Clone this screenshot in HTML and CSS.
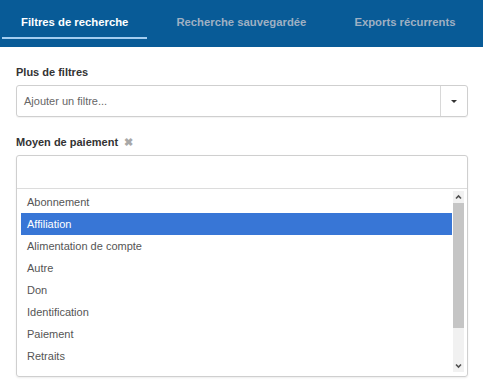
FILE: index.html
```html
<!DOCTYPE html>
<html lang="fr">
<head>
<meta charset="utf-8">
<link rel="stylesheet" href="styles.css">
</head>
<body>
<header class="header">
  <nav class="tabs">
    <span class="tab active">Filtres de recherche</span>
    <span class="tab">Recherche sauvegardée</span>
    <span class="tab">Exports récurrents</span>
  </nav>
</header>
<main class="content">
  <section class="field">
    <label class="label">Plus de filtres</label>
    <div class="select">
      <span class="select-text">Ajouter un filtre...</span>
      <span class="select-arrow"><span class="caret"></span></span>
    </div>
  </section>
  <section class="field">
    <label class="label">Moyen de paiement <span class="remove">✖</span></label>
    <div class="multi">
      <div class="multi-input"></div>
      <div class="results">
        <ul class="options">
          <li>Abonnement</li>
          <li class="hl">Affiliation</li>
          <li>Alimentation de compte</li>
          <li>Autre</li>
          <li>Don</li>
          <li>Identification</li>
          <li>Paiement</li>
          <li>Retraits</li>
        </ul>
        <div class="scrollbar">
          <svg class="sb-arrow" width="11" height="12" viewBox="0 0 11 12"><path d="M3 7.5 L5.5 5 L8 7.5" fill="none" stroke="#505050" stroke-width="1.6"/></svg>
          <div class="sb-thumb"></div>
          <div class="sb-track"></div>
          <svg class="sb-arrow" width="11" height="12" viewBox="0 0 11 12"><path d="M3 4.5 L5.5 7 L8 4.5" fill="none" stroke="#505050" stroke-width="1.6"/></svg>
        </div>
      </div>
    </div>
  </section>
</main>
</body>
</html>
```

FILE: styles.css
```css
* { box-sizing: border-box; }
html, body { margin: 0; padding: 0; }
body {
  width: 483px;
  height: 384px;
  overflow: hidden;
  background: #fff;
  font-family: "Liberation Sans", Arial, sans-serif;
  color: #333;
}
.header {
  background: #085b97;
  height: 47px;
  padding-left: 2px;
}
.tabs {
  display: flex;
  gap: 10px;
}
.tab {
  padding: 15px 19px 8px 19px;
  font-size: 11.3px;
  line-height: 14px;
  font-weight: bold;
  color: #9fb0c3;
  border-bottom: 2px solid transparent;
  white-space: nowrap;
}
.tab.active {
  color: #fff;
  border-bottom-color: #a3cdf0;
}
.content {
  padding: 19px 15px 0 16px;
}
.field { margin-bottom: 19px; }
.label {
  display: block;
  font-size: 11px;
  font-weight: bold;
  line-height: 13px;
  color: #333;
  margin-bottom: 6px;
}
.remove {
  color: #a8a8a8;
  font-size: 11px;
  margin-left: 3px;
}
.select {
  display: flex;
  height: 32px;
  border: 1px solid #cfcfcf;
  border-radius: 3px;
  box-shadow: 0 1px 1px rgba(0,0,0,0.05);
}
.select-text {
  flex: 1;
  padding-left: 7px;
  font-size: 11px;
  line-height: 30px;
  color: #666;
}
.select-arrow {
  width: 27px;
  border-left: 1px solid #d8d8d8;
  display: flex;
  align-items: center;
  justify-content: center;
}
.caret {
  width: 0;
  height: 0;
  border-left: 3.5px solid transparent;
  border-right: 3.5px solid transparent;
  border-top: 3.5px solid #333;
}
.multi {
  border: 1px solid #cfcfcf;
  border-radius: 3px;
  box-shadow: 0 1px 2px rgba(0,0,0,0.08);
}
.multi-input {
  height: 33px;
  border-bottom: 1px solid #dcdcdc;
}
.results {
  display: flex;
  padding: 2px 3px 4px 4px;
}
.options {
  flex: 1;
  list-style: none;
  margin: 0;
  padding: 0 1px 0 0;
  height: 181px;
}
.options li {
  height: 22px;
  line-height: 22px;
  padding-left: 6px;
  font-size: 11px;
  color: #555;
}
.options li.hl {
  background: #3876d6;
  color: #fff;
}
.scrollbar {
  width: 11px;
  display: flex;
  flex-direction: column;
  background: #f1f1f1;
}
.sb-arrow { display: block; flex: none; }
.sb-thumb {
  height: 125px;
  background: #c5c5c5;
}
.sb-track { flex: 1; }
```
